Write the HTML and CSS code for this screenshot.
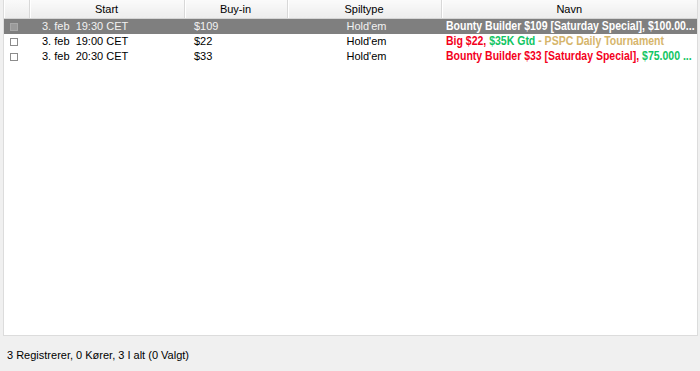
FILE: index.html
```html
<!DOCTYPE html>
<html lang="da">
<head>
  <meta charset="UTF-8" />
  <meta name="viewport" content="width=device-width, initial-scale=1.0"/>
  <title>Turneringer</title>
  <link rel="stylesheet" href="styles.css">
</head>
<body>

  <div class="panel">
    <table class="list">
      <colgroup>
        <col class="c-check">
        <col class="c-start">
        <col class="c-buyin">
        <col class="c-type">
        <col class="c-name">
      </colgroup>
      <thead>
        <tr>
          <th></th>
          <th>Start</th>
          <th>Buy-in</th>
          <th>Spiltype</th>
          <th>Navn</th>
        </tr>
      </thead>
      <tbody>
        <tr class="selected">
          <td><span class="box"></span></td>
          <td class="start">3. feb&nbsp; 19:30 CET</td>
          <td class="buyin">$109</td>
          <td class="type">Hold'em</td>
          <td class="name"><span class="fit">Bounty Builder $109 [Saturday Special], $100.00...</span></td>
        </tr>
        <tr>
          <td><span class="box"></span></td>
          <td class="start">3. feb&nbsp; 19:00 CET</td>
          <td class="buyin">$22</td>
          <td class="type">Hold'em</td>
          <td class="name"><span class="fit"><span class="red">Big $22, </span><span class="green">$35K Gtd</span><span class="tan"> - PSPC Daily Tournament</span></span></td>
        </tr>
        <tr>
          <td><span class="box"></span></td>
          <td class="start">3. feb&nbsp; 20:30 CET</td>
          <td class="buyin">$33</td>
          <td class="type">Hold'em</td>
          <td class="name"><span class="fit"><span class="red">Bounty Builder $33 [Saturday Special], </span><span class="green">$75.000 ...</span></span></td>
        </tr>
      </tbody>
    </table>
  </div>

  <div class="statusbar">3 Registrerer, 0 Kører, 3 I alt (0 Valgt)</div>

</body>
</html>
```

FILE: styles.css
```css
html, body { height: 100%; }
body {
  margin: 0;
  background: #f0f0f0;
  font-family: "Liberation Sans", Arial, sans-serif;
  font-size: 11px;
  color: #000;
  overflow: hidden;
}
.panel {
  margin: 0 2px 0 3px;
  height: 336px;
  background: #fff;
  border: 1px solid #dcdcdc;
  border-top: none;
  box-sizing: border-box;
}
.list {
  width: 100%;
  border-collapse: collapse;
  table-layout: fixed;
}
.c-check { width: 25px; }
.c-start { width: 155px; }
.c-buyin { width: 103px; }
.c-type { width: 154px; }
.list th {
  height: 18px;
  padding: 0;
  font-weight: normal;
  text-align: center;
  background: linear-gradient(to bottom, #fafafa, #ededed);
  border-right: 1px solid #d8d8d8;
  border-bottom: 1px solid #d5d5d5;
  box-shadow: inset 1px 0 0 #fff;
}
.list th:last-child { border-right: none; }
.list td {
  height: 15px;
  padding: 0;
  white-space: nowrap;
  overflow: hidden;
  line-height: 15px;
}
.start { padding-left: 13px !important; }
.buyin { padding-left: 10px !important; }
.type { text-align: center; padding-left: 5px !important; }
.name {
  padding-left: 5px !important;
  font-weight: bold;
  font-size: 12px;
}
.fit {
  display: inline-block;
  transform: scaleX(0.875);
  transform-origin: 0 50%;
}
.box {
  display: block;
  width: 6px;
  height: 6px;
  margin-left: 6px;
  border: 1px solid #8c8c8c;
  background: #fff;
}
.selected td {
  background: #7f7f7f;
  color: #f2f2f2;
}
.selected .name { color: #fff; }
.selected .box {
  background: #9a9a9a;
  border-color: #a8a8a8;
}
.red { color: #f4001c; }
.green { color: #12c563; }
.tan { color: #d6b56b; }
.statusbar {
  padding: 12px 0 0 7px;
  font-size: 11px;
  line-height: 14px;
}
```
